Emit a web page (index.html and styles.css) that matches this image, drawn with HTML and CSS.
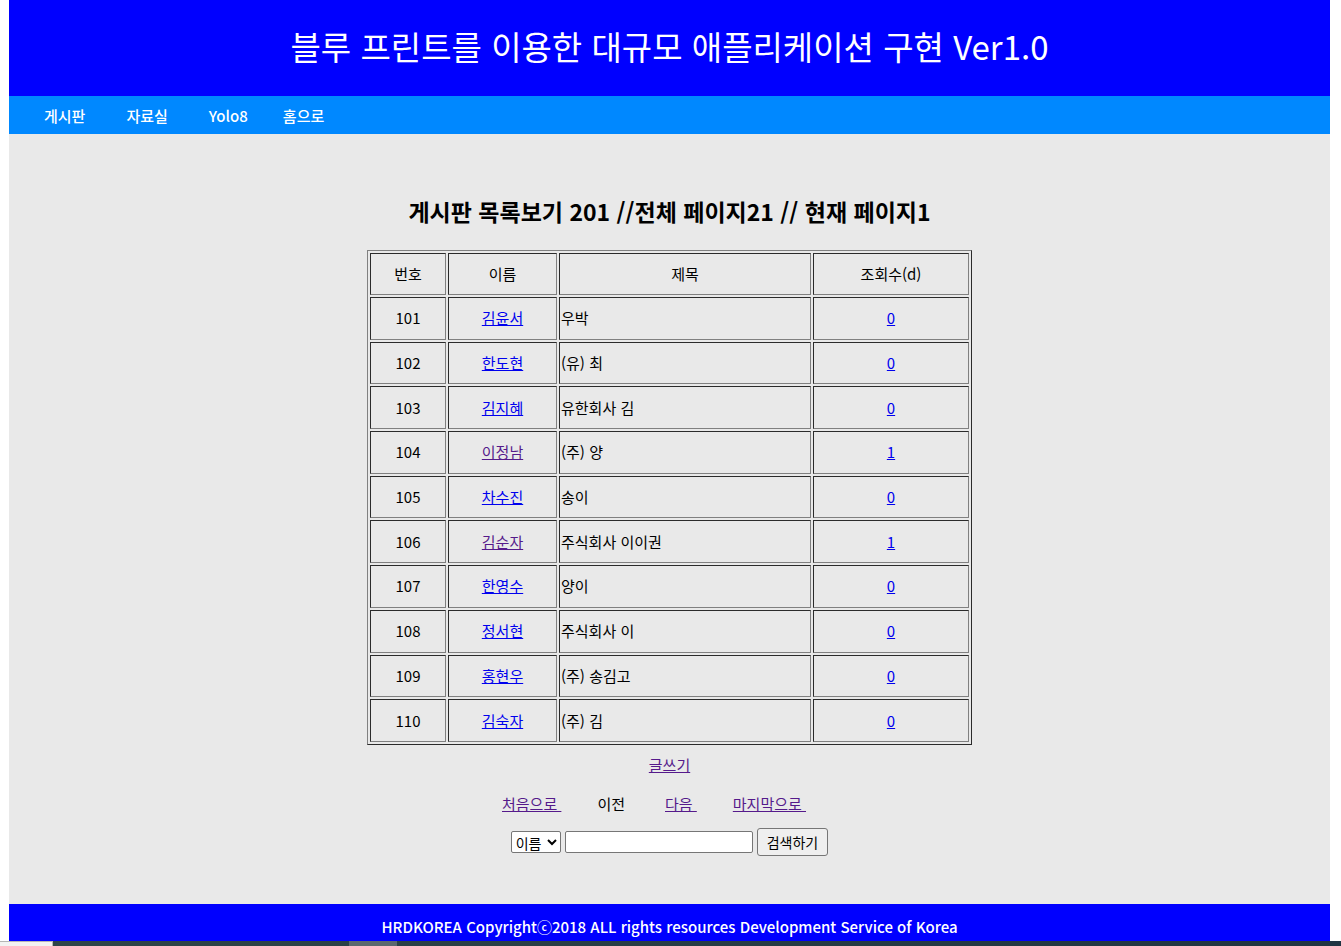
FILE: index.html
```html
<!DOCTYPE html>
<html lang="ko">
<head>
<meta charset="utf-8">
<title>게시판 목록보기</title>
<link rel="stylesheet" href="styles.css">
</head>
<body>
<div class="page">
  <header class="banner">블루 프린트를 이용한 대규모 애플리케이션 구현 Ver1.0</header>
  <nav class="menu">
    <a class="hangul" href="#board">게시판</a>
    <a class="hangul" href="#files">자료실</a>
    <a href="#yolo">Yolo8</a>
    <a class="hangul" href="#home">홈으로</a>
  </nav>
  <main class="content">
    <h2 class="heading">게시판 목록보기 201 //전체 페이지21 // 현재 페이지1</h2>
    <table class="board">
      <colgroup><col class="col-no"><col class="col-name"><col class="col-title"><col class="col-hits"></colgroup>
      <thead>
        <tr><th>번호</th><th>이름</th><th>제목</th><th>조회수(d)</th></tr>
      </thead>
      <tbody>
        <tr><td>101</td><td><a href="#101">김윤서</a></td><td class="subject">우박</td><td><a href="#101">0</a></td></tr>
        <tr><td>102</td><td><a href="#102">한도현</a></td><td class="subject">(유) 최</td><td><a href="#102">0</a></td></tr>
        <tr><td>103</td><td><a href="#103">김지혜</a></td><td class="subject">유한회사 김</td><td><a href="#103">0</a></td></tr>
        <tr><td>104</td><td><a class="seen" href="#104">이정남</a></td><td class="subject">(주) 양</td><td><a href="#104">1</a></td></tr>
        <tr><td>105</td><td><a href="#105">차수진</a></td><td class="subject">송이</td><td><a href="#105">0</a></td></tr>
        <tr><td>106</td><td><a class="seen" href="#106">김순자</a></td><td class="subject">주식회사 이이권</td><td><a href="#106">1</a></td></tr>
        <tr><td>107</td><td><a href="#107">한영수</a></td><td class="subject">양이</td><td><a href="#107">0</a></td></tr>
        <tr><td>108</td><td><a href="#108">정서현</a></td><td class="subject">주식회사 이</td><td><a href="#108">0</a></td></tr>
        <tr><td>109</td><td><a href="#109">홍현우</a></td><td class="subject">(주) 송김고</td><td><a href="#109">0</a></td></tr>
        <tr><td>110</td><td><a href="#110">김숙자</a></td><td class="subject">(주) 김</td><td><a href="#110">0</a></td></tr>
      </tbody>
    </table>
    <div class="write"><a class="seen" href="#write">글쓰기</a></div>
    <div class="pager">
      <a class="seen" href="#first">처음으로&nbsp;</a>
      <span class="current">이전</span>
      <a class="seen" href="#next">다음&nbsp;</a>
      <a class="seen" href="#last">마지막으로&nbsp;</a>
    </div>
    <form class="search">
      <select class="field" aria-label="검색 항목"><option>이름</option></select>
      <input class="keyword" type="text" aria-label="검색어">
      <button class="submit" type="button">검색하기</button>
    </form>
  </main>
  <footer class="copyright">HRDKOREA Copyrightⓒ2018 ALL rights resources Development Service of Korea</footer>
</div>
<div class="taskbar"><div class="start"></div><div class="task"></div></div>
</body>
</html>
```
FILE: styles.css
```css
* { box-sizing: border-box; }

body {
  margin: 0;
  min-height: 100vh;
  display: flex;
  flex-direction: column;
  background: #fff;
  color: #000;
  font: 15px/22px "Noto Sans CJK KR", sans-serif;
}

.page {
  flex: 1;
  display: flex;
  flex-direction: column;
  margin: 0 11px 0 9px;
}

.banner {
  padding: 22px 0 26px;
  background: #00f;
  color: #fff;
  font-size: 33px;
  line-height: 48px;
  text-align: center;
}

.menu {
  display: flex;
  gap: 35px;
  padding: 9px 35px 7px;
  background: #08f;
}

.menu a {
  color: #fff;
  font-weight: 500;
  text-decoration: none;
}

.menu .hangul { padding-right: 6px; }

.content {
  flex: 1;
  display: flex;
  flex-direction: column;
  align-items: center;
  padding-top: 60px;
  background: #e9e9e9;
}

.heading {
  margin: 0 0 22px;
  font-size: 23px;
  line-height: 34px;
  font-weight: 700;
}

.board {
  width: 605px;
  height: 495px;
  table-layout: fixed;
  border: 1px solid;
  border-color: #808080 #2b2b2b #2b2b2b #808080;
  border-collapse: separate;
  border-spacing: 2px;
}

.col-no { width: 76px; }
.col-name { width: 109px; }
.col-title { width: 252px; }
.col-hits { width: 156px; }

.board th,
.board td {
  padding: 1px;
  border: 1px solid;
  border-color: #2b2b2b #808080 #808080 #2b2b2b;
  font-weight: 400;
  text-align: center;
}

.board th { height: 42px; }

.board .subject { text-align: left; }

.content a { color: #00e; }
.content .seen { color: #551a8b; }

.write { margin-top: 9px; }

.pager {
  display: flex;
  gap: 36px;
  margin-top: 17px;
  padding-right: 31px;
}

.current { padding-right: 4px; }

.search {
  display: flex;
  align-items: center;
  gap: 4px;
  margin-top: 13px;
}

.field,
.keyword,
.submit {
  border: 1px solid #767676;
  border-radius: 2px;
  font: 14px/18px "Noto Sans CJK KR", sans-serif;
  color: #000;
}

.field {
  width: 50px;
  height: 22px;
  padding: 0;
  background: #fff;
}

.keyword {
  width: 188px;
  height: 22px;
  background: #fff;
}

.submit {
  padding: 4px 9px;
  border-radius: 3px;
  background: #efefef;
}

.copyright {
  padding: 12px 0 3px;
  background: #00f;
  color: #fff;
  font-weight: 500;
  text-align: center;
}

.taskbar {
  display: flex;
  height: 5px;
  background: linear-gradient(90deg, #2f4549, #203442);
}

.start {
  width: 53px;
  border-top: 1px solid #b5b5b5;
  border-right: 1px solid #b5b5b5;
  background: #f2f2f2;
}

.task {
  width: 48px;
  margin-left: 296px;
  background: #5b686f;
}
```
